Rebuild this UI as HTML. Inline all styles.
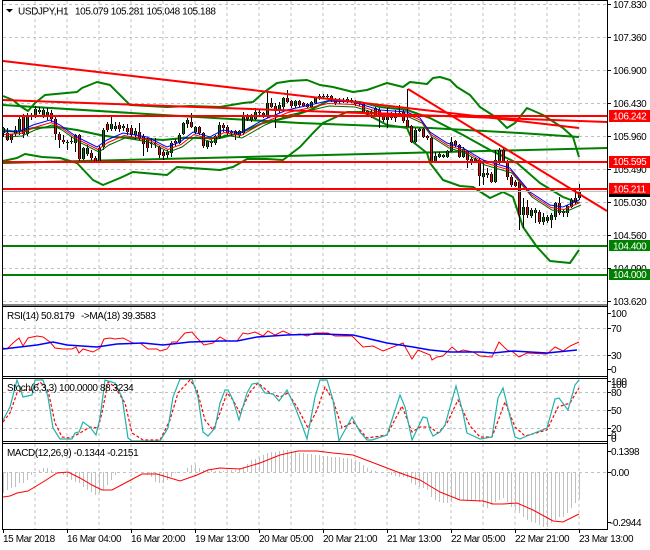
<!DOCTYPE html>
<html><head><meta charset="utf-8"><style>
html,body{margin:0;padding:0;background:#fff;width:650px;height:550px;overflow:hidden}
svg{display:block}
text{font-family:"Liberation Sans",sans-serif;font-size:10px;letter-spacing:-.4px;fill:#000}
.g{stroke:#c0c0c0;stroke-width:1;stroke-dasharray:3 3;fill:none}
.l{fill:none}
</style></head><body>
<svg width="650" height="550" viewBox="0 0 650 550" xmlns="http://www.w3.org/2000/svg">
<defs>
<path id="gb" d="M3.5 128V133M15.5 130V134M19.5 119V131M27.5 117V134M31.5 115V117M35.5 109V116M39.5 110V112M43.5 110V115M47.5 112V115M67.5 142V143M71.5 141V142M75.5 135V143M83.5 148V159M87.5 148V154M99.5 148V161M103.5 130V147M111.5 124V129M115.5 126V129M123.5 126V128M135.5 131V135M151.5 143V144M155.5 143V144M167.5 152V155M171.5 143V153M179.5 135V143M183.5 123V134M187.5 120V124M195.5 127V132M207.5 141V147M215.5 136V143M219.5 125V137M239.5 131V135M243.5 116V133M251.5 116V120M255.5 112V119M259.5 112V113M267.5 103V117M279.5 105V111M283.5 98V107M295.5 101V106M311.5 102V107M315.5 98V103M319.5 96V98M323.5 96V97M327.5 96V97M339.5 100V102M343.5 100V101M347.5 99V101M351.5 100V101M359.5 103V104M375.5 108V115M387.5 115V120M395.5 113V118M399.5 113V114M415.5 130V142M419.5 129V131M435.5 156V162M439.5 154V157M443.5 155V157M447.5 151V157M451.5 142V151M463.5 149V157M483.5 173V177M487.5 173V175M495.5 160V182M499.5 150V162M523.5 207V215M531.5 210V216M535.5 210V213M543.5 217V222M547.5 217V221M551.5 215V220M555.5 203V217M567.5 206V213M571.5 200V207M579.5 192V198"/>
<path id="rb" d="M7.5 133V140M11.5 134V140M23.5 117V134M51.5 113V119M55.5 119V134M59.5 134V140M63.5 140V142M79.5 135V159M91.5 153V158M95.5 158V161M107.5 124V130M119.5 125V129M127.5 128V132M131.5 128V135M139.5 132V138M143.5 136V144M147.5 140V148M159.5 147V155M163.5 152V156M175.5 141V143M191.5 122V127M199.5 127V133M203.5 133V146M211.5 141V143M223.5 125V128M227.5 127V133M231.5 132V133M235.5 131V135M247.5 116V119M263.5 113V117M271.5 103V107M275.5 106V111M287.5 98V102M291.5 101V106M299.5 101V105M303.5 103V106M307.5 104V107M331.5 96V100M335.5 99V103M355.5 101V104M363.5 104V112M367.5 111V113M371.5 112V113M379.5 110V115M383.5 115V120M391.5 115V118M403.5 112V121M407.5 120V127M411.5 126V142M423.5 129V137M427.5 136V138M431.5 138V162M455.5 141V145M459.5 145V157M467.5 151V160M471.5 159V162M475.5 159V162M479.5 160V176M491.5 174V182M503.5 150V162M507.5 163V177M511.5 177V185M515.5 182V186M519.5 182V215M527.5 207V215M539.5 212V222M559.5 203V213M563.5 211V213M575.5 198V202"/>
<path id="ma" d="M3 132L20 131 33 125 50 120 60 125 77 137 97 147 107 140 123 133 147 137 167 147 180 142 193 132 210 137 223 130 240 133 263 120 287 110 310 105 327 101 353 102 380 110 407 112 420 118 430 132 447 143 463 148 483 160 510 168 530 192 550 205 563 207 579 200"/>
</defs>

<!-- grid -->
<path class="g" d="M35 1V305M67 1V305M99 1V305M131 1V305M163 1V305M195 1V305M227 1V305M259 1V305M291 1V305M323 1V305M355 1V305M387 1V305M419 1V305M451 1V305M483 1V305M515 1V305M547 1V305M579 1V305
M35 307V376M67 307V376M99 307V376M131 307V376M163 307V376M195 307V376M227 307V376M259 307V376M291 307V376M323 307V376M355 307V376M387 307V376M419 307V376M451 307V376M483 307V376M515 307V376M547 307V376M579 307V376
M35 379V441M67 379V441M99 379V441M131 379V441M163 379V441M195 379V441M227 379V441M259 379V441M291 379V441M323 379V441M355 379V441M387 379V441M419 379V441M451 379V441M483 379V441M515 379V441M547 379V441M579 379V441
M35 444V529M67 444V529M99 444V529M131 444V529M163 444V529M195 444V529M227 444V529M259 444V529M291 444V529M323 444V529M355 444V529M387 444V529M419 444V529M451 444V529M483 444V529M515 444V529M547 444V529M579 444V529"/>
<path class="g" d="M3 4.500H607M3 37.500H607M3 70.500H607M3 103.500H607M3 136.500H607M3 169.500H607M3 202.500H607M3 235.500H607M3 268.500H607M3 301.500H607M3 328.500H607M3 355.500H607M3 392.500H607M3 410.500H607M3 428.500H607M3 472.500H607"/>

<!-- macd histogram -->
<path fill="none" stroke="#c0c0c0" d="M3.500 472V493M7.500 472V490M11.500 472V488M15.500 472V487M19.500 472V483M23.500 472V483M27.500 472V480M31.500 472V475M35.500 472V473M39.500 472V470M43.500 472V468M47.500 472V468M51.500 472V470M55.500 472V473M59.500 472V473M63.500 472V475M67.500 472V477M71.500 472V480M75.500 472V482M79.500 472V483M83.500 472V487M87.500 472V490M91.500 472V492M95.500 472V495M99.500 472V493M103.500 472V490M107.500 472V485M111.500 472V480M115.500 472V475M119.500 472V473M131.500 472V473M143.500 472V473M147.500 472V475M151.500 472V477M155.500 472V482M159.500 472V483M163.500 472V483M167.500 472V480M171.500 472V477M175.500 472V473M187.500 472V468M191.500 472V465M195.500 472V465M199.500 472V468M203.500 472V470M207.500 472V470M211.500 472V470M215.500 472V471M219.500 472V471M223.500 472V471M227.500 472V471M231.500 472V470M235.500 472V470M239.500 472V468M243.500 472V467M247.500 472V464M251.500 472V460M255.500 472V459M259.500 472V457M263.500 472V455M267.500 472V453M271.500 472V452M275.500 472V452M279.500 472V451M283.500 472V450M287.500 472V450M291.500 472V452M295.500 472V452M299.500 472V453M303.500 472V453M307.500 472V454M311.500 472V454M315.500 472V455M319.500 472V455M323.500 472V456M327.500 472V456M331.500 472V457M335.500 472V457M339.500 472V457M343.500 472V458M347.500 472V458M351.500 472V459M355.500 472V460M359.500 472V462M363.500 472V465M367.500 472V468M371.500 472V470M375.500 472V471M387.500 472V473M391.500 472V475M395.500 472V476M399.500 472V477M403.500 472V477M407.500 472V478M411.500 472V483M415.500 472V485M419.500 472V487M423.500 472V488M427.500 472V490M431.500 472V497M435.500 472V500M439.500 472V502M443.500 472V503M447.500 472V503M451.500 472V502M455.500 472V498M459.500 472V500M463.500 472V500M467.500 472V500M471.500 472V500M475.500 472V500M479.500 472V502M483.500 472V507M487.500 472V508M491.500 472V505M495.500 472V502M499.500 472V500M503.500 472V498M507.500 472V502M511.500 472V507M515.500 472V510M519.500 472V513M523.500 472V517M527.500 472V520M531.500 472V522M535.500 472V523M539.500 472V525M543.500 472V527M547.500 472V527M551.500 472V523M555.500 472V520M559.500 472V517M563.500 472V517M567.500 472V513M571.500 472V508M575.500 472V503M579.500 472V499"/>

<!-- bands -->
<g class="l" stroke="#008000" stroke-width="2" stroke-linejoin="round">
<path d="M3 163L607 148"/>
<path d="M3 105L163 115 300 123 430 128 520 133 579 137"/>
<path d="M3 96L13 100 20 106 28 111 35 103 45 95 77 92 82 88 97 82 110 85 130 105 167 107 190 106 220 107 243 103 253 102 263 93 277 83 290 81 307 80 320 85 333 87 353 92 367 90 387 83 403 87 410 82 427 84 433 78 440 77 450 80 457 87 470 95 480 107 497 118 507 128 515 123 527 108 543 115 563 128 573 137 579 157"/>
<path d="M3 130L17 132 33 128 57 127 77 130 100 135 113 137 133 138 163 140 183 138 220 138 240 133 263 123 290 117 310 110 330 100 360 102 380 107 407 110 430 118 463 135 490 150 517 163 540 183 563 197 579 203"/>
<path d="M3 161L17 158 25 154 42 157 60 158 77 163 93 180 103 185 120 178 133 172 167 175 177 167 220 170 233 167 247 159 267 159 283 160 300 147 313 133 323 123 347 112 363 112 387 125 407 128 413 142 427 153 430 163 443 180 460 186 473 187 490 198 503 192 513 197 523 227 537 247 550 261 570 263 579 250"/>
</g>

<!-- candles -->
<path fill="none" stroke="#000" d="M3.500 127V137M7.500 128V141M11.500 134V143M15.500 126V136M19.500 115V135M23.500 114V138M27.500 113V136M31.500 113V120M35.500 106V118M39.500 107V114M43.500 108V118M47.500 108V120M51.500 110V122M55.500 117V140M59.500 132V148M63.500 135V144M67.500 140V150M71.500 137V144M75.500 134V152M79.500 134V162M83.500 147V160M87.500 145V156M91.500 150V160M95.500 156V163M99.500 146V162M103.500 128V150M107.500 122V132M111.500 117V131M115.500 122V131M119.500 122V132M123.500 124V131M127.500 124V135M131.500 125V137M135.500 128V140M139.500 123V141M143.500 134V156M147.500 138V152M151.500 138V148M155.500 138V148M159.500 146V158M163.500 150V160M167.500 150V158M171.500 141V157M175.500 139V146M179.500 133V144M183.500 122V135M187.500 118V128M191.500 113V128M195.500 126V134M199.500 126V135M203.500 132V148M207.500 140V149M211.500 139V147M215.500 135V145M219.500 122V139M223.500 123V132M227.500 125V135M231.500 130V136M235.500 130V140M239.500 130V137M243.500 112V135M247.500 114V121M251.500 114V122M255.500 108V120M259.500 110V117M263.500 112V118M267.500 92V118M271.500 98V108M275.500 103V128M279.500 102V113M283.500 97V110M287.500 90V103M291.500 100V108M295.500 100V108M299.500 100V107M303.500 102V107M307.500 103V108M311.500 101V108M315.500 97V104M319.500 94V100M323.500 94V99M327.500 94V99M331.500 95V102M335.500 98V105M339.500 98V104M343.500 98V103M347.500 97V103M351.500 98V103M355.500 100V106M359.500 102V106M363.500 103V114M367.500 110V115M371.500 110V118M375.500 107V117M379.500 108V128M383.500 114V122M387.500 108V128M391.500 112V120M395.500 110V122M399.500 105V115M403.500 110V123M407.500 89V127M411.500 125V143M415.500 128V143M419.500 128V132M423.500 128V138M427.500 135V140M431.500 137V163M435.500 152V162M439.500 152V158M443.500 154V158M447.500 150V158M451.500 137V152M455.500 140V147M459.500 144V158M463.500 147V158M467.500 150V168M471.500 157V165M475.500 158V163M479.500 158V186M483.500 160V185M487.500 168V178M491.500 172V183M495.500 150V183M499.500 148V164M503.500 148V163M507.500 160V180M511.500 175V187M515.500 180V187M519.500 180V230M523.500 198V228M527.500 200V218M531.500 208V218M535.500 208V223M539.500 210V224M543.500 213V225M547.500 215V223M551.500 213V228M555.500 202V220M559.500 197V215M563.500 209V217M567.500 205V217M571.500 198V208M575.500 190V204M579.500 184V200"/>
<use href="#gb" fill="none" stroke="#000" stroke-width="3"/>
<use href="#rb" fill="none" stroke="#000" stroke-width="3"/>
<use href="#gb" fill="none" stroke="#008000" stroke-width="1"/>
<use href="#rb" fill="none" stroke="#f00" stroke-width="1"/>

<!-- moving averages -->
<use href="#ma" transform="translate(2,5)" fill="none" stroke="#006400"/>
<use href="#ma" transform="translate(1,2.500)" fill="none" stroke="#f00"/>
<use href="#ma" fill="none" stroke="#00f"/>

<!-- levels -->
<path fill="none" stroke="#c0c0c0" d="M3 191.500H607"/>
<g class="l" stroke="#f00" stroke-width="2">
<path d="M3 61L579 128"/>
<path d="M3 100L607 122"/>
<path d="M3 116H607M3 162H607M3 189H607"/>
<path d="M408 89L607 211"/>
</g>
<path fill="none" stroke="#008000" stroke-width="2" d="M3 246H607M3 275H607"/>

<!-- RSI -->
<path fill="none" stroke="#f00" d="M3 348L7 349 13 343 19 338 23 346 28 338 37 336 43 337 50 342 55 348 63 349 72 349 76 347 79 353 83 349 93 352 100 348 104 339 110 338 115 339 123 338 133 343 140 343 148 349 157 349 160 351 167 349 172 342 177 342 185 333 192 332 197 338 204 345 213 343 220 337 227 341 237 341 243 333 248 334 255 332 263 336 268 331 275 335 283 331 292 335 300 334 307 336 315 333 328 333 335 336 352 336 363 347 373 346 383 351 403 343 412 359 418 350 430 355 432 360 437 357 443 356 452 347 458 352 463 350 473 352 480 356 492 357 499 342 507 350 513 352 519 357 527 353 547 354 555 347 563 351 570 346 579 342"/>
<path fill="none" stroke="#00f" stroke-width="1.500" d="M3 349L20 347 37 345 53 342 67 345 97 347 117 344 143 343 163 345 190 342 220 341 237 341 257 337 287 335 320 334 353 335 387 343 413 347 430 350 450 352 480 352 493 353 513 351 547 353 577 350"/>

<!-- Stoch -->
<path fill="none" stroke="#f00" stroke-width="1.200" stroke-dasharray="3 2" d="M3 422L10 413 17 393 23 390 32 390 40 382 48 390 55 423 62 437 70 438 80 433 90 427 98 428 102 413 108 382 115 387 125 403 132 433 143 440 160 440 170 420 178 393 190 380 197 390 205 420 213 430 220 413 227 393 233 400 240 413 250 392 258 383 270 393 280 397 288 393 297 407 308 428 317 410 325 387 333 400 342 428 353 422 367 438 387 435 402 406 412 432 420 427 430 427 438 433 447 423 458 400 470 426 480 437 492 437 505 402 515 427 525 436 547 430 558 407 570 403 579 388"/>
<path fill="none" stroke="#20b2aa" stroke-width="1.200" d="M3 420L10 407 17 380 23 397 32 395 35 380 43 380 48 397 53 428 60 439 72 439 75 433 79 432 83 422 90 427 96 435 100 418 105 380 115 383 122 397 128 438 132 441 160 441 168 428 173 397 180 379 192 379 198 397 203 432 208 436 215 428 220 403 225 390 228 390 233 400 239 420 247 393 252 384 258 383 265 393 273 394 279 401 287 390 295 407 302 425 307 439 315 397 320 380 327 380 333 400 339 441 352 417 360 432 367 440 372 440 387 435 400 395 405 407 412 440 423 417 427 418 430 430 433 436 440 432 445 425 456 386 463 413 467 433 480 439 492 437 498 398 503 388 515 437 520 439 527 436 547 428 555 399 559 398 568 410 575 385 579 380"/>

<!-- MACD signal -->
<path fill="none" stroke="#f00" d="M3 497L10 496 17 493 28 491 43 482 57 473 68 472 80 478 92 485 102 490 112 490 127 482 142 474 157 474 180 481 197 475 208 470 220 468 240 469 260 463 280 455 298 451 317 451 333 453 353 455 387 468 400 473 420 480 430 486 440 492 460 500 483 501 493 504 503 504 517 503 533 510 553 521 563 522 579 514"/>

<!-- frames -->
<path fill="none" stroke="#000" d="M2.500 0V529.500M607.500 0V529.500M2 .5H608M2 305H608M2 306.500H608M2 376.500H608M2 378.500H608M2 441.500H608M2 443.500H608M2 529.500H608"/>
<path fill="none" stroke="#000" d="M608 4.500h3M608 37.500h3M608 70.500h3M608 103.500h3M608 136.500h3M608 169.500h3M608 202.500h3M608 235.500h3M608 268.500h3M608 301.500h3M608 313.500h3M608 328.500h3M608 355.500h3M608 369.500h3M608 381.500h3M608 392.500h3M608 410.500h3M608 428.500h3M608 435.500h3M608 451.500h3M608 472.500h3M608 522.500h3M3.500 530v3M67.500 530v3M131.500 530v3M195.500 530v3M259.500 530v3M323.500 530v3M387.500 530v3M451.500 530v3M515.500 530v3M579.500 530v3"/>

<!-- header -->
<path d="M6 9h7l-3.500 3.500z" fill="#000"/>
<text x="18" y="14.500" xml:space="preserve">USDJPY,H1</text>
<text x="75" y="14.500">105.079 105.281 105.048 105.188</text>
<text x="7" y="319">RSI(14) 50.8179</text>
<text x="81" y="319">-&gt;MA(18) 39.3583</text>
<text x="7" y="391">Stoch(6,3,3) 100.0000 88.3234</text>
<text x="7" y="456">MACD(12,26,9) -0.1344 -0.2151</text>

<!-- right axis -->
<text x="613" y="8">107.830</text>
<text x="613" y="41">107.360</text>
<text x="613" y="74">106.900</text>
<text x="613" y="107">106.430</text>
<text x="613" y="140">105.960</text>
<text x="613" y="173">105.490</text>
<text x="613" y="206">105.030</text>
<text x="613" y="239">104.560</text>
<text x="613" y="272">104.090</text>
<text x="613" y="305">103.620</text>

<rect x="609" y="110" width="41" height="12" fill="#f00"/>
<text x="613" y="119.500" style="fill:#fff">106.242</text>
<rect x="609" y="156" width="41" height="12" fill="#f00"/>
<text x="613" y="165" style="fill:#fff">105.595</text>
<rect x="609" y="193" width="41" height="4" fill="#000"/>
<rect x="609" y="183" width="41" height="11" fill="#f00"/>
<text x="613" y="192.500" style="fill:#fff">105.211</text>
<rect x="609" y="240" width="41" height="11" fill="#008000"/>
<text x="613" y="249.500" style="fill:#fff">104.400</text>
<rect x="609" y="269" width="41" height="11" fill="#008000"/>
<text x="613" y="278" style="fill:#fff">104.000</text>

<text x="611" y="317">100</text>
<text x="611" y="332">70</text>
<text x="611" y="359">30</text>
<text x="611" y="373">0</text>
<text x="611" y="385">100</text>
<text x="611" y="388">100</text>
<text x="611" y="396">80</text>
<text x="611" y="414">50</text>
<text x="611" y="432">20</text>
<text x="611" y="439">0</text>
<text x="611" y="442">0</text>
<text x="611" y="455">0.1398</text>
<text x="611" y="476">0.00</text>
<text x="610" y="526">-0.2944</text>

<!-- time axis -->
<text x="3" y="542">15 Mar 2018</text>
<text x="67" y="542">16 Mar 04:00</text>
<text x="131" y="542">16 Mar 20:00</text>
<text x="195" y="542">19 Mar 13:00</text>
<text x="259" y="542">20 Mar 05:00</text>
<text x="323" y="542">20 Mar 21:00</text>
<text x="387" y="542">21 Mar 13:00</text>
<text x="451" y="542">22 Mar 05:00</text>
<text x="515" y="542">22 Mar 21:00</text>
<text x="579" y="542">23 Mar 13:00</text>
</svg>
</body></html>
